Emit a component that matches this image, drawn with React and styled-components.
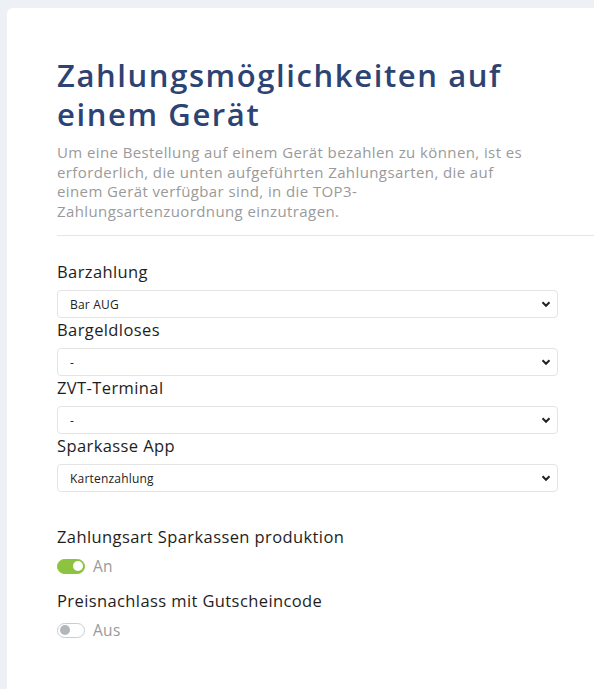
import React from 'react';
import styled, { createGlobalStyle } from 'styled-components';

const GlobalStyle = createGlobalStyle`
  html, body {
    margin: 0;
    padding: 0;
    background: #edf0f4;
    overflow: hidden;
  }
  body {
    font-family: "Open Sans", "Liberation Sans", sans-serif;
  }
`;

const Page = styled.div`
  padding: 8px 0 0 7px;
  height: 100vh;
  box-sizing: border-box;
`;

const Card = styled.div`
  height: 100%;
  background: #fff;
  border-radius: 6px 0 0 0;
  padding: 48px 0 0 50px;
  box-sizing: border-box;
`;

const Title = styled.h1`
  margin: 0;
  font-size: 31px;
  line-height: 39px;
  font-weight: 600;
  letter-spacing: 1.6px;
  color: #2d4373;
  width: 480px;
`;

const Lead = styled.p`
  margin: 9px 0 0;
  width: 475px;
  font-size: 15px;
  line-height: 19.5px;
  letter-spacing: 0.4px;
  color: #9a9a9a;
`;

const Divider = styled.hr`
  border: 0;
  border-top: 1px solid #e6e6e6;
  margin: 14px 0 0;
`;

const Form = styled.div`
  margin-top: 24px;
  width: 501px;
`;

const Label = styled.div`
  font-size: 16.5px;
  line-height: 24px;
  font-weight: 500;
  letter-spacing: 0.4px;
  color: #1e1e1e;
  margin-bottom: 6px;
`;

const Select = styled.select`
  display: block;
  width: 100%;
  height: 28px;
  border: 1px solid #e4e4e4;
  border-radius: 4px;
  background: #fff;
  font-family: inherit;
  font-size: 12px;
  letter-spacing: 0.2px;
  color: #222;
  padding: 0 12px;
  appearance: none;
  background-image: url("data:image/svg+xml,%3Csvg xmlns='http://www.w3.org/2000/svg' width='10' height='8' viewBox='0 0 10 8'%3E%3Cpath d='M1.5 2.2 5 5.8 8.5 2.2' fill='none' stroke='%23222' stroke-width='2'/%3E%3C/svg%3E");
  background-repeat: no-repeat;
  background-position: right 6px center;
  outline: none;
`;

const Toggles = styled.div`
  margin-top: 33px;
  display: flex;
  flex-direction: column;
  gap: 12px;
`;

const ToggleRow = styled.label`
  display: flex;
  align-items: center;
  gap: 8px;
  margin-top: 6px;
`;

const Track = styled.span`
  position: relative;
  display: inline-block;
  width: 28px;
  height: 15px;
  border-radius: 8px;
  box-sizing: border-box;
  background: ${p => (p.$on ? '#8cc33f' : '#fff')};
  border: 1px solid ${p => (p.$on ? '#8cc33f' : '#c9ccd0')};

  &::after {
    content: '';
    position: absolute;
    top: 1.5px;
    left: ${p => (p.$on ? '15px' : '1.5px')};
    width: 10px;
    height: 10px;
    border-radius: 50%;
    background: ${p => (p.$on ? '#fff' : '#b3b7bc')};
  }
`;

const State = styled.span`
  font-size: 15.5px;
  letter-spacing: 0.3px;
  color: #9a9a9a;
`;

const selects = [
  { label: 'Barzahlung', value: 'Bar AUG' },
  { label: 'Bargeldloses', value: '-' },
  { label: 'ZVT-Terminal', value: '-' },
  { label: 'Sparkasse App', value: 'Kartenzahlung' },
];

const toggles = [
  { label: 'Zahlungsart Sparkassen produktion', on: true },
  { label: 'Preisnachlass mit Gutscheincode', on: false },
];

export default function App() {
  return (
    <>
      <GlobalStyle />
      <Page>
        <Card>
          <Title>Zahlungsmöglichkeiten auf einem Gerät</Title>
          <Lead>
            Um eine Bestellung auf einem Gerät bezahlen zu können, ist es erforderlich, die unten
            aufgeführten Zahlungsarten, die auf einem Gerät verfügbar sind, in die
            TOP3-Zahlungsartenzuordnung einzutragen.
          </Lead>
          <Divider />
          <Form>
            {selects.map(s => (
              <div key={s.label}>
                <Label>{s.label}</Label>
                <Select defaultValue={s.value}>
                  <option>{s.value}</option>
                </Select>
              </div>
            ))}
            <Toggles>
              {toggles.map(t => (
                <div key={t.label}>
                  <Label>{t.label}</Label>
                  <ToggleRow>
                    <Track $on={t.on} />
                    <State>{t.on ? 'An' : 'Aus'}</State>
                  </ToggleRow>
                </div>
              ))}
            </Toggles>
          </Form>
        </Card>
      </Page>
    </>
  );
}
